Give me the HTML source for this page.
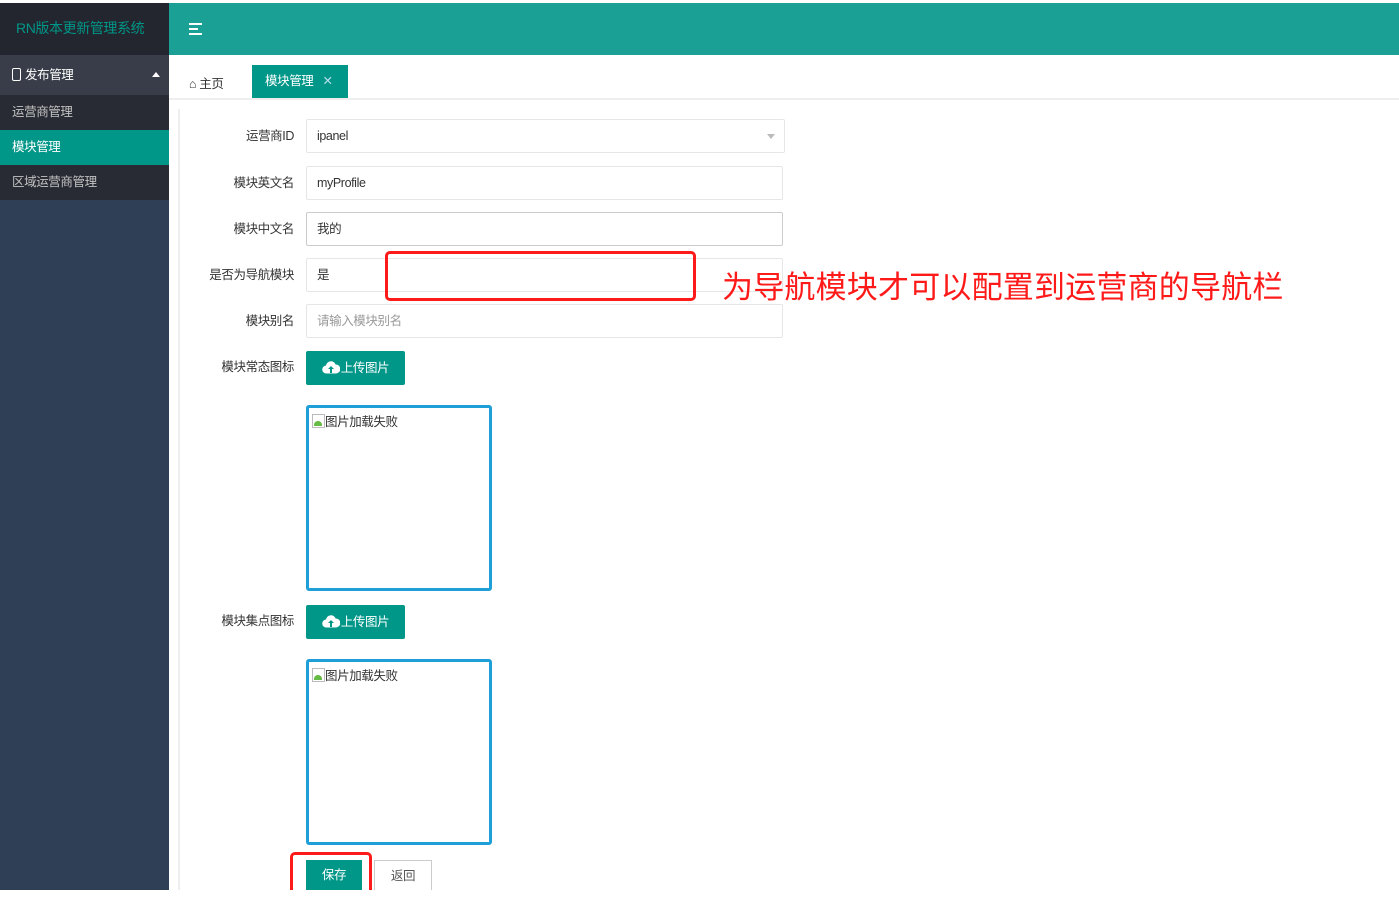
<!DOCTYPE html>
<html><head><meta charset="utf-8"><style>
*{margin:0;padding:0;box-sizing:border-box}
body{width:1399px;height:897px;background:#fff;position:relative;overflow:hidden;font-family:"Liberation Sans","Noto Sans CJK SC",sans-serif;font-size:12.5px;letter-spacing:-0.4px;color:#333}
.abs{position:absolute}
.side{left:0;top:3px;width:169px;height:887px;background:#2f4056}
.logo{left:0;top:0;width:169px;height:52px;background:#23262e;color:#009688;font-size:14px;line-height:50px;padding-left:16px}
.grp{left:0;top:52px;width:169px;height:40px;background:#393d49;color:#fff;line-height:40px;padding-left:12px}
.it{left:0;width:169px;height:35px;line-height:35px;padding-left:12px;color:#c2c2c2;background:#282b33}
.hdr{left:169px;top:3px;width:1230px;height:52px;background:#1aa094}
.tabs{left:169px;top:55px;width:1230px;height:45px;border-bottom:2px solid #eee}
.lbl{left:180px;width:114px;text-align:right;color:#333}
.inp{left:306px;width:477px;height:34px;border:1px solid #e6e6e6;padding-left:10px;line-height:32px;border-radius:2px}
.btn{left:306px;width:99px;height:34px;background:#009688;color:#fff;line-height:34px;text-align:center;border-radius:2px}
.btn svg{vertical-align:-2px;margin-right:1px}
.img{left:306px;width:186px;height:186px;border:3px solid #1e9fd8;border-radius:3px;padding:6px 3px;line-height:16px}
.bi{display:inline-block;width:13px;height:14px;border:1px solid #bbb;vertical-align:-2px;position:relative;background:#fff}
.bi:after{content:"";position:absolute;left:1px;bottom:1px;width:8px;height:5px;background:#6b4;border-radius:4px 4px 0 0}
</style></head><body>
<div class="abs side">
<div class="abs logo">RN版本更新管理系统</div>
<div class="abs grp"><span style="display:inline-block;width:9px;height:13px;border:1.5px solid #fff;border-radius:2px;vertical-align:-2px;margin-right:4px"></span>发布管理<span style="position:absolute;right:9px;top:17px;border:4px solid transparent;border-bottom:5px solid #fff;border-top:0"></span></div>
<div class="abs it" style="top:92px">运营商管理</div>
<div class="abs it" style="top:127px;background:#009688;color:#fff">模块管理</div>
<div class="abs it" style="top:162px">区域运营商管理</div>
</div>
<div class="abs hdr"><div class="abs" style="left:20px;top:20px;width:13px">
<div style="height:2px;background:#fff;margin-bottom:3px"></div><div style="height:2px;background:#fff;margin-right:4px;margin-bottom:3px"></div><div style="height:2px;background:#fff"></div></div></div>
<div class="abs tabs">
<div class="abs" style="left:20px;top:18px">⌂ 主页</div>
<div class="abs" style="left:83px;top:10px;width:96px;height:33px;background:#009688;color:#fff;line-height:33px;padding-left:13px">模块管理 <span style="color:#bde;margin-left:6px">✕</span></div>
</div>
<div class="abs" style="left:178px;top:109px;width:2px;height:781px;background:#eee"></div>

<div class="abs lbl" style="top:125px">运营商ID</div>
<div class="abs inp" style="top:119px;width:479px">ipanel<span style="position:absolute;right:9px;top:14px;border:4px solid transparent;border-top:5px solid #bbb;border-bottom:0"></span></div>
<div class="abs lbl" style="top:172px">模块英文名</div>
<div class="abs inp" style="top:166px">myProfile</div>
<div class="abs lbl" style="top:218px">模块中文名</div>
<div class="abs inp" style="top:212px;border-color:#ccc">我的</div>
<div class="abs lbl" style="top:264px">是否为导航模块</div>
<div class="abs inp" style="top:258px">是</div>
<div class="abs lbl" style="top:310px">模块别名</div>
<div class="abs inp" style="top:304px;color:#999">请输入模块别名</div>
<div class="abs" style="left:385px;top:251px;width:311px;height:50px;border:3px solid #ff1a1a;border-radius:5px"></div>
<div class="abs" style="left:722px;top:262px;font-size:31px;letter-spacing:0.2px;color:#ff1a1a;white-space:nowrap">为导航模块才可以配置到运营商的导航栏</div>

<div class="abs lbl" style="top:356px">模块常态图标</div>
<div class="abs btn" style="top:351px"><svg width="18" height="13" viewBox="0 0 18 13"><path d="M4.5 12.5a4 4 0 0 1-.5-8 5 5 0 0 1 9.6-1A4.3 4.3 0 0 1 14 12.5z" fill="#fff"/><path d="M9 5l-3 3h2v4h2V8h2z" fill="#009688"/></svg>上传图片</div>
<div class="abs img" style="top:405px"><span class="bi"></span>图片加载失败</div>
<div class="abs lbl" style="top:610px">模块集点图标</div>
<div class="abs btn" style="top:605px"><svg width="18" height="13" viewBox="0 0 18 13"><path d="M4.5 12.5a4 4 0 0 1-.5-8 5 5 0 0 1 9.6-1A4.3 4.3 0 0 1 14 12.5z" fill="#fff"/><path d="M9 5l-3 3h2v4h2V8h2z" fill="#009688"/></svg>上传图片</div>
<div class="abs img" style="top:659px"><span class="bi"></span>图片加载失败</div>

<div class="abs" style="left:306px;top:860px;width:56px;height:30px;background:#009688;color:#fff;text-align:center;line-height:30px">保存</div>
<div class="abs" style="left:374px;top:860px;width:58px;height:30px;border:1px solid #ccc;border-bottom:0;text-align:center;line-height:30px;color:#555">返回</div>
<div class="abs" style="left:290px;top:852px;width:82px;height:45px;border:3px solid #ff1a1a;border-bottom:0;border-radius:5px 5px 0 0"></div>
<div class="abs" style="left:0;top:890px;width:1399px;height:7px;background:#fff"></div>
</body></html>
